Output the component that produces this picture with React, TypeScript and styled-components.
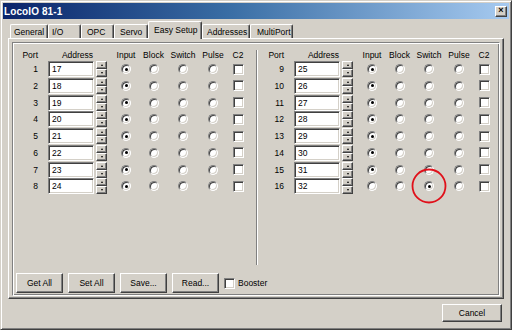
import React from "react";
import styled, { createGlobalStyle } from "styled-components";

const Global = createGlobalStyle`
  html, body { margin: 0; padding: 0; background: #d4d0c8; }
  body {
    font-family: "Liberation Sans", Arial, sans-serif;
    font-size: 8.5px;
    color: #000;
  }
  * { box-sizing: border-box; }
`;

const Window = styled.div`
  width: 512px;
  height: 330px;
  background: #d4d0c8;
  border: 1px solid;
  border-color: #d4d0c8 #404040 #404040 #d4d0c8;
  box-shadow: inset 1px 1px 0 #fff, inset -1px -1px 0 #808080;
  padding: 2px;
  display: flex;
  flex-direction: column;
  overflow: hidden;
`;

const TitleBar = styled.div`
  height: 16px;
  flex: none;
  display: flex;
  align-items: center;
  justify-content: space-between;
  padding: 0 2px 0 1px;
  background: linear-gradient(to right, #0a246a 0%, #3a6ea5 45%, #a6caf0 100%);
`;

const TitleText = styled.span`
  color: #fff;
  font-weight: bold;
  font-size: 10px;
  letter-spacing: 0.1px;
`;

const CloseButton = styled.div`
  width: 12px;
  height: 11px;
  background: #d4d0c8;
  border: 1px solid;
  border-color: #fff #404040 #404040 #fff;
  box-shadow: inset -1px -1px 0 #808080;
  display: flex;
  align-items: center;
  justify-content: center;
  font-size: 9px;
  font-weight: bold;
  line-height: 1;
  padding-bottom: 1px;
`;

const Client = styled.div`
  flex: 1;
  display: flex;
  flex-direction: column;
  padding: 0 5px;
`;

const TabStrip = styled.div`
  display: flex;
  align-items: flex-end;
  height: 17px;
  margin: 2px 0 0 2px;
  position: relative;
  z-index: 1;
`;

const Tab = styled.div<{ $w: number; $pl: number; $active?: boolean }>`
  width: ${(p) => p.$w}px;
  height: ${(p) => (p.$active ? 18 : 14)}px;
  margin-bottom: ${(p) => (p.$active ? -1 : 0)}px;
  padding: ${(p) => (p.$active ? "0 0 2px" : "0")} ${(p) => p.$pl}px;
  display: flex;
  align-items: center;
  white-space: nowrap;
  background: #d4d0c8;
  border-top: 1px solid #fff;
  border-left: 1px solid #fff;
  border-right: 1px solid #404040;
  box-shadow: inset -1px 0 0 #808080;
  border-radius: 2px 2px 0 0;
`;

const TabPanel = styled.div`
  height: 261px;
  flex: none;
  display: flex;
  padding: 3px 3px 2px 3px;
  border: 1px solid;
  border-color: #fff #404040 #404040 #fff;
  box-shadow: inset -1px -1px 0 #808080;
`;

const InnerPanel = styled.div`
  flex: 1;
  display: flex;
  flex-direction: column;
  border: 1px solid;
  border-color: #808080 #fff #fff #808080;
  box-shadow: inset 1px 1px 0 #fff, inset -1px -1px 0 #808080;
  padding: 1px;
`;

const HalvesRow = styled.div`
  flex: 1;
  display: flex;
`;

const Half = styled.div`
  width: 236px;
  display: grid;
  grid-template-columns: 34px 48px 15px 30px 25px 34px 26px 24px;
  grid-template-rows: 17px repeat(8, 16.75px);
  align-content: start;
`;

const Divider = styled.div`
  width: 2px;
  margin: 6px 2px 8px 6px;
  border-left: 1px solid #808080;
  border-right: 1px solid #fff;
`;

const Head = styled.div<{ $span?: number; $align?: string }>`
  grid-column: span ${(p) => p.$span || 1};
  align-self: end;
  justify-self: ${(p) => p.$align || "center"};
  line-height: 10px;
  padding: 0 ${(p) => (p.$span === 2 ? 4 : 0)}px 1px 0;
  white-space: nowrap;
`;

const PortHead = styled(Head)`
  padding-right: 10px;
`;

const PortNum = styled.div`
  justify-self: end;
  align-self: start;
  height: 16px;
  line-height: 16px;
  padding-right: 10px;
`;

const TextBox = styled.div`
  width: 46px;
  height: 16px;
  align-self: start;
  background: #fff;
  border: 1px solid;
  border-color: #808080 #fff #fff #808080;
  box-shadow: inset 1px 1px 0 #404040, inset -1px -1px 0 #d4d0c8;
  padding: 0 3px;
  line-height: 14px;
`;

const Spinner = styled.div`
  width: 11px;
  height: 16px;
  align-self: start;
  display: flex;
  flex-direction: column;
`;

const SpinButton = styled.div<{ $down?: boolean }>`
  flex: 1;
  background: #d4d0c8;
  border: 1px solid;
  border-color: #fff #404040 #404040 #fff;
  box-shadow: inset -1px -1px 0 #808080;
  display: flex;
  align-items: center;
  justify-content: center;
  &::after {
    content: "";
    width: 0;
    height: 0;
    border-left: 1.5px solid transparent;
    border-right: 1.5px solid transparent;
    ${(p) =>
      p.$down ? "border-top: 2px solid #000;" : "border-bottom: 2px solid #000;"}
  }
`;

const Cell = styled.div`
  position: relative;
  height: 16px;
  align-self: start;
  display: flex;
  align-items: center;
  justify-content: center;
`;

const Radio = styled.span<{ $on?: boolean }>`
  width: 10px;
  height: 10px;
  border-radius: 50%;
  background: #fff;
  border: 1px solid;
  border-color: #808080 #fff #fff #808080;
  box-shadow: inset 1px 1px 0 #404040, inset -1px -1px 0 #d4d0c8;
  display: flex;
  align-items: center;
  justify-content: center;
  &::after {
    content: "";
    width: 3px;
    height: 3px;
    border-radius: 50%;
    background: ${(p) => (p.$on ? "#000" : "transparent")};
  }
`;

const Check = styled.span`
  width: 11px;
  height: 11px;
  background: #fff;
  border: 1px solid;
  border-color: #808080 #fff #fff #808080;
  box-shadow: inset 1px 1px 0 #404040, inset -1px -1px 0 #d4d0c8;
`;

const Marker = styled.svg`
  position: absolute;
  left: 50%;
  top: 50%;
  width: 36px;
  height: 36px;
  transform: translate(-50%, -50%);
  pointer-events: none;
  overflow: visible;
`;

const ButtonRow = styled.div`
  display: flex;
  align-items: center;
  gap: 5px;
  height: 20px;
  margin-bottom: 1px;
  padding-left: 2px;
`;

const Button = styled.div<{ $w: number; $h: number }>`
  width: ${(p) => p.$w}px;
  height: ${(p) => p.$h}px;
  display: flex;
  align-items: center;
  justify-content: center;
  background: #d4d0c8;
  border: 1px solid;
  border-color: #fff #404040 #404040 #fff;
  box-shadow: inset -1px -1px 0 #808080;
  white-space: nowrap;
`;

const CheckLabel = styled.label`
  display: flex;
  align-items: center;
  gap: 3px;
`;

const Footer = styled.div`
  display: flex;
  justify-content: flex-end;
  margin-top: 5px;
  padding-right: 2px;
`;

const tabs = [
  { label: "General", w: 38, pl: 3 },
  { label: "I/O", w: 33, pl: 3 },
  { label: "OPC", w: 33, pl: 5 },
  { label: "Servo", w: 34, pl: 5 },
  { label: "Easy Setup", w: 54, pl: 5, active: true },
  { label: "Addresses", w: 48, pl: 4 },
  { label: "MultiPort", w: 43, pl: 6 },
];

type Row = { port: number; addr: number; mode: number };

const modes = ["Input", "Block", "Switch", "Pulse"];

function PortHalf({ rows }: { rows: Row[] }) {
  return (
    <Half>
      <PortHead $align="end">Port</PortHead>
      <Head $span={2}>Address</Head>
      {modes.map((m) => (
        <Head key={m}>{m}</Head>
      ))}
      <Head>C2</Head>
      {rows.map((r) => (
        <React.Fragment key={r.port}>
          <PortNum>{r.port}</PortNum>
          <TextBox>{r.addr}</TextBox>
          <Spinner>
            <SpinButton />
            <SpinButton $down />
          </Spinner>
          {modes.map((m, i) => (
            <Cell key={m}>
              <Radio $on={r.mode === i} />
              {r.port === 16 && i === 2 && (
                <Marker viewBox="0 0 36 36">
                  <circle cx="18" cy="18" r="16.5" fill="none" stroke="#e0101a" strokeWidth="1.8" />
                </Marker>
              )}
            </Cell>
          ))}
          <Cell>
            <Check />
          </Cell>
        </React.Fragment>
      ))}
    </Half>
  );
}

const left: Row[] = Array.from({ length: 8 }, (_, i) => ({ port: i + 1, addr: 17 + i, mode: 0 }));
const right: Row[] = Array.from({ length: 8 }, (_, i) => ({
  port: i + 9,
  addr: 25 + i,
  mode: i === 7 ? 2 : 0,
}));

export default function App() {
  return (
    <>
      <Global />
      <Window>
        <TitleBar>
          <TitleText>LocoIO 81-1</TitleText>
          <CloseButton>×</CloseButton>
        </TitleBar>
        <Client>
          <TabStrip>
            {tabs.map((t) => (
              <Tab key={t.label} $w={t.w} $pl={t.pl} $active={t.active}>
                {t.label}
              </Tab>
            ))}
          </TabStrip>
          <TabPanel>
            <InnerPanel>
              <HalvesRow>
                <PortHalf rows={left} />
                <Divider />
                <PortHalf rows={right} />
              </HalvesRow>
              <ButtonRow>
                <Button $w={47} $h={20}>Get All</Button>
                <Button $w={47} $h={20}>Set All</Button>
                <Button $w={47} $h={20}>Save...</Button>
                <Button $w={47} $h={20}>Read...</Button>
                <CheckLabel>
                  <Check />
                  Booster
                </CheckLabel>
              </ButtonRow>
            </InnerPanel>
          </TabPanel>
          <Footer>
            <Button $w={60} $h={18}>Cancel</Button>
          </Footer>
        </Client>
      </Window>
    </>
  );
}
